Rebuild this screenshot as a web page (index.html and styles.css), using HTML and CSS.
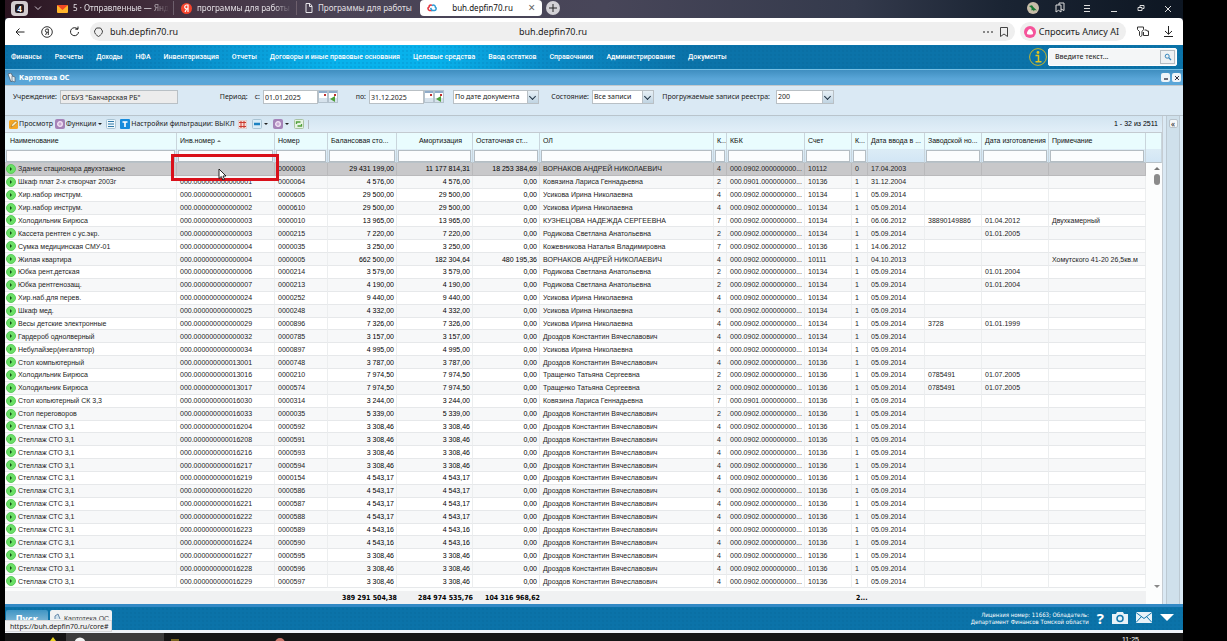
FILE: index.html
```html
<!DOCTYPE html>
<html lang="ru">
<head>
<meta charset="utf-8">
<title>Картотека ОС</title>
<link rel="stylesheet" href="styles.css">
</head>
<body>
<div class="screen">
  <header class="tabs">
    <button class="tab-count">4</button>
    <button class="ico chev"><svg width="8" height="6" viewBox="0 0 8 6"><path d="M1 1.5l3 3 3-3" fill="none" stroke="#cfc7cf"/></svg></button>
    <a class="tab t1" href="#"><svg width="11" height="9" viewBox="0 0 11 9"><rect y="1" width="11" height="8" rx="1" fill="#ffb52b"/><path d="M0 1h11L5.500 6z" fill="#f04824"/></svg><span>5 · Отправленные — Яндекс</span></a>
    <a class="tab t2" href="#"><svg width="11" height="11" viewBox="0 0 11 11"><circle cx="5.500" cy="5.500" r="5.500" fill="#f5442c"/><path d="M7 9V2H5.700a1.900 1.900 0 000 3.900H7M5.600 6L4 9" fill="none" stroke="#fff" stroke-width="1.200"/></svg><span>программы для работы бухгалтера</span></a>
    <a class="tab t3" href="#"><svg width="8" height="10" viewBox="0 0 8 10"><path d="M1 .5h4l2 2.500v6.500H1zM4.500 1v2.500H7" fill="none" stroke="#e8e6ea"/></svg><span>Программы для работы</span></a>
    <a class="tab active" href="#"><svg width="10" height="8" viewBox="0 0 10 8"><path d="M5 1.500C3.500.3 2 1.500 2 3 .5 3.500.7 6 2.500 6.500H5" fill="none" stroke="#e5333d" stroke-width="1.600"/><path d="M5 1.500c2-1 3.500 0 3.300 1.700C9.700 4 9.300 6.300 7.500 6.500H5L3.500 4" fill="none" stroke="#2c9bd6" stroke-width="1.500"/></svg><span>buh.depfin70.ru</span><i>×</i></a>
    <button class="plus" aria-label="Новая вкладка"><svg width="8" height="8" viewBox="0 0 8 8"><path d="M4 0v8M0 4h8" stroke="#222"/></svg></button>
    <div class="win">
      <svg width="12" height="12" viewBox="0 0 12 12"><circle cx="6" cy="6" r="6" fill="#c8bda9"/><path d="M2 4l3-.8 1.500 2L10 8.500 7.500 8 7 9.500 6 8 4.500 8.500 4.500 6z" fill="#187a34"/></svg>
      <svg width="12" height="12" viewBox="0 0 12 12"><path d="M2 3h5v7L4.500 8.300 2 10zM5 3V1h5v7.500L7 7" fill="none" stroke="#ddd"/></svg>
      <svg width="12" height="12" viewBox="0 0 12 12"><path d="M3 3.500h6M3 6.500h6M3 9.500h6" stroke="#ddd"/></svg>
      <svg width="12" height="12" viewBox="0 0 12 12"><path d="M3 9.500h6" stroke="#ddd"/></svg>
      <svg width="12" height="12" viewBox="0 0 12 12"><path d="M3 5.500h4v3H3zM5 5V3.500h4v3H7.500" fill="none" stroke="#ddd"/></svg>
      <svg width="12" height="12" viewBox="0 0 12 12"><path d="M3 4l6 6M9 4l-6 6" stroke="#ddd"/></svg>
    </div>
  </header>

  <div class="address">
    <button class="ico"><svg width="10" height="10" viewBox="0 0 10 10"><path d="M9.500 5H1M4.500 1.500L1 5l3.500 3.500" fill="none" stroke="#222"/></svg></button>
    <button class="ico"><svg width="12" height="12" viewBox="0 0 12 12"><circle cx="6" cy="6" r="5.300" fill="none" stroke="#333"/><path d="M7.300 9V3H6a1.600 1.600 0 000 3.300h1.300M5.800 6.300L4.600 9" fill="none" stroke="#333"/></svg></button>
    <button class="ico"><svg width="11" height="11" viewBox="0 0 11 11"><path d="M9.500 6A4 4 0 117 2l2 1M9 .5V3.200H6.300" fill="none" stroke="#222"/></svg></button>
    <div class="urlbar">
      <svg width="9" height="10" viewBox="0 0 9 10"><path d="M2.500 1h4l2 3c0 2.500-1.500 4-4 5.500C2 8 .5 6.500.5 4z" fill="none" stroke="#444"/></svg>
      <span class="url">buh.depfin70.ru</span>
      <span class="url-center">buh.depfin70.ru</span>
      <svg width="10" height="2" viewBox="0 0 10 2"><path d="M0 1h2M4 1h2M8 1h2" stroke="#666" stroke-width="1.500"/></svg>
      <svg width="8" height="10" viewBox="0 0 8 10"><path d="M.5.500h7v9L4 7 .5 9.500z" fill="none" stroke="#444"/></svg>
    </div>
    <button class="alice"><svg width="12" height="12" viewBox="0 0 12 12"><circle cx="6" cy="6" r="6" fill="#f5539a"/><path d="M6 3c1.500 0 3.500 3.500 3 4.800C8.500 9 3.500 9 3 7.800 2.500 6.500 4.500 3 6 3z" fill="#fff"/></svg>Спросить Алису AI</button>
    <button class="ico"><svg width="12" height="11" viewBox="0 0 12 11"><path d="M.5 1h6v2.500L5 5.500v4L3.500 10.500 2.500 9.500V5.500L.5 3.500zM7.500 4h2l.5 1h1.500v4.500h-5V6" fill="none" stroke="#333"/></svg></button>
    <button class="ico dl"><svg width="9" height="11" viewBox="0 0 9 11"><path d="M4.500 0v8M1 5l3.500 3.300L8 5M0 10.500h9" fill="none" stroke="#222"/></svg></button>
  </div>

  <nav class="menu">
    <a href="#">Финансы</a><a href="#">Расчеты</a><a href="#">Доходы</a><a href="#">НФА</a><a href="#">Инвентаризация</a><a href="#">Отчеты</a><a href="#">Договоры и иные правовые основания</a><a href="#">Целевые средства</a><a href="#">Ввод остатков</a><a href="#">Справочники</a><a href="#">Администрирование</a><a href="#">Документы</a>
    <button class="info"><svg width="18" height="18" viewBox="0 0 18 18"><circle cx="9" cy="9" r="8.400" fill="none" stroke="#c9b52a"/><circle cx="9" cy="4.500" r="1.400" fill="#e5c51f"/><path d="M6.500 7.500H9.500V13.500M6.500 13.800h6" fill="none" stroke="#e5c51f" stroke-width="1.500"/></svg></button>
    <div class="search"><input type="text" aria-label="Поиск" placeholder="Введите текст..."><button aria-label="Найти"><svg width="8" height="8" viewBox="0 0 8 8"><circle cx="3.200" cy="3.200" r="2" fill="none" stroke="#3787bd"/><path d="M4.800 4.800L7 7" stroke="#3787bd" stroke-width="1.300"/></svg></button></div>
  </nav>

  <div class="title">
    <svg width="10" height="10" viewBox="0 0 10 10"><path d="M1 1l3-1 3 6-3 3z" fill="#e9eef2" stroke="#456" stroke-width=".7"/><path d="M5 3l3 1v5l-3-1z" fill="#dde8ee" stroke="#456" stroke-width=".6"/></svg>
    <h1>Картотека ОС</h1>
    <button aria-label="Свернуть"><svg width="8" height="8" viewBox="0 0 8 8"><path d="M2 5h4" stroke="#334" stroke-width="1.400"/></svg></button>
    <button aria-label="Закрыть"><svg width="8" height="8" viewBox="0 0 8 8"><path d="M2 2l4 4M6 2L2 6" stroke="#334"/></svg></button>
  </div>

  <form class="filters">
    <label class="l-org" for="org">Учреждение:</label><input id="org" class="f-org" value='ОГБУЗ "Бакчарская РБ"' readonly>
    <label class="l-period" for="from"><span>Период:</span>с:</label><input id="from" class="f-date" value="01.01.2025"><span class="cal"></span><span class="cal go"></span>
    <label class="l-to" for="to">по:</label><input id="to" class="f-date" value="31.12.2025"><span class="cal"></span><span class="cal go"></span>
    <span class="combo c-doc"><select aria-label="Тип даты"><option>По дате документа</option></select></span>
    <label class="l-state" for="state">Состояние:</label><span class="combo c-state"><select id="state"><option>Все записи</option></select></span>
    <label class="l-count" for="count">Прогружаемые записи реестра:</label><span class="combo c-count"><select id="count"><option>200</option></select></span>
  </form>

  <main class="work">
    <section class="registry">
      <div class="toolbar">
        <button><svg width="9" height="9" viewBox="0 0 9 9"><rect width="9" height="9" rx="1.500" fill="#f5a623"/><path d="M2 7l1-2.500L6.500 1 8 2.500 4.500 6z" fill="#fff3c8" stroke="#7a5a18" stroke-width=".5"/></svg>Просмотр</button>
        <button><svg width="10" height="10" viewBox="0 0 10 10"><rect width="10" height="10" rx="2" fill="#a583b8"/><circle cx="5" cy="5" r="2.300" fill="#c9a9d4" stroke="#f3e6f6" stroke-width="1.300"/></svg>Функции<b></b></button>
        <button class="list"><svg width="10" height="10" viewBox="0 0 10 10"><rect x=".5" y=".5" width="9" height="9" rx="1" fill="#eef7fc" stroke="#a9c3d3"/><path d="M2 2.500h6M2 5h6M2 7.500h6" stroke="#2f78a8"/></svg></button>
        <button><svg width="10" height="10" viewBox="0 0 10 10"><rect width="10" height="10" rx="1" fill="#168bdc"/><path d="M2.500 3h5M5 3v5" stroke="#fff" stroke-width="1.600"/></svg>Настройки фильтрации: ВЫКЛ</button>
        <button class="gap"><svg width="9" height="9" viewBox="0 0 9 9"><rect width="9" height="9" rx="1" fill="#f8dcd6" stroke="#a9b3bb" stroke-width=".5"/><path d="M1 2.500h7M1 6.500h7M3 1v7M6 1v7" stroke="#c93a31"/></svg></button>
        <button class="gap"><svg width="10" height="10" viewBox="0 0 10 10"><rect x=".5" y=".5" width="9" height="9" rx="1" fill="#d8ecf7" stroke="#a9c3d3"/><path d="M2 5h6" stroke="#1c82c2" stroke-width="2.500"/></svg><b></b></button>
        <button class="gap"><svg width="10" height="10" viewBox="0 0 10 10"><rect width="10" height="10" rx="2" fill="#a583b8"/><circle cx="5" cy="5" r="2.300" fill="#c9a9d4" stroke="#f3e6f6" stroke-width="1.300"/></svg><b></b></button>
        <button class="gap"><svg width="10" height="10" viewBox="0 0 10 10"><rect x=".5" y=".5" width="9" height="9" rx="1" fill="#e6f3e2" stroke="#a9c3a3"/><path d="M2.500 5V3h4M7.500 5v2h-4" fill="none" stroke="#51a03c" stroke-width="1.300"/></svg></button>
        <i class="sep"></i>
        <span class="range">1 - 32 из 2511</span>
      </div>
      <div class="grid">
        <table>
          <colgroup><col><col class="w-inv"><col class="w-num"><col class="w-bal"><col class="w-amo"><col class="w-ost"><col class="w-ol"><col class="w-k"><col class="w-kbk"><col class="w-acc"><col class="w-q"><col class="w-in"><col class="w-fab"><col class="w-made"><col class="w-note"><col class="w-bar"></colgroup>
          <thead>
            <tr class="names"><th>Наименование</th><th>Инв.номер <i class="sort"></i></th><th>Номер</th><th>Балансовая сто...</th><th class="r">Амортизация</th><th>Остаточная ст...</th><th>ОЛ</th><th>К...</th><th>КБК</th><th>Счет</th><th>К...</th><th>Дата ввода в ...</th><th>Заводской но...</th><th>Дата изготовления</th><th>Примечание</th><th></th></tr>
            <tr class="search-row"></tr>
          </thead>
          <tbody></tbody>
          <tfoot>
            <tr><td></td><td></td><td></td><td>389 291 504,38</td><td>284 974 535,76</td><td>104 316 968,62</td><td></td><td></td><td></td><td></td><td class="cnt">2...</td><td></td><td></td><td></td><td></td><td class="bar"></td></tr>
          </tfoot>
        </table>
        <div class="scroll"><i class="up"></i><i class="thumb"></i><i class="down"></i></div>
      </div>
    </section>
    <aside class="side"><button aria-label="Развернуть">«</button></aside>
  </main>

  <footer class="desk">
    <button class="start">Пуск</button>
    <button class="task"><svg width="8" height="8" viewBox="0 0 8 8"><path d="M1 6V3l3-2 2 5" fill="#cfe3ee" stroke="#68a" /></svg>Картотека ОС</button>
    <p>Лицензия номер: 11663; Обладатель:<br>Департамент Финансов Томской области</p>
    <button class="help">?</button>
    <button><svg width="16" height="12" viewBox="0 0 16 12"><path d="M0 2h4l1-2h6l1 2h4v10H0z" fill="#e8f2f8"/><circle cx="8" cy="6.500" r="3" fill="none" stroke="#1277ad" stroke-width="1.500"/></svg></button>
    <button><svg width="16" height="11" viewBox="0 0 16 11"><rect width="16" height="11" fill="#e8f2f8"/><path d="M0 .5l8 6 8-6M0 10.500l5.500-6M16 10.500l-5.500-6" fill="none" stroke="#1277ad"/></svg></button>
    <button><svg width="14" height="7" viewBox="0 0 14 7"><path d="M0 0h14L7 7z" fill="#fff"/></svg></button>
  </footer>
  <div class="status">https://buh.depfin70.ru/core#</div>
  <div class="mark"></div>
  <svg class="pointer" width="9" height="13" viewBox="0 0 9 13"><path d="M1 1v9.500l2.300-2 1.500 3.500 1.700-.7L5 8h3z" fill="#fff" stroke="#111" stroke-width=".9"/></svg>
</div>
<div class="taskbar">
  <svg width="14" height="8" viewBox="0 0 14 8"><path d="M5 8l3-4 3 4z" fill="#e8d21f"/></svg>
  <span class="app"><svg width="12" height="8" viewBox="0 0 12 8"><circle cx="6" cy="10" r="5.500" fill="#f2f2f2"/></svg></span>
  <svg width="10" height="8" viewBox="0 0 10 8"><path d="M0 6h8v2H0z" fill="#7a6520"/></svg>
  <svg class="red" width="12" height="8" viewBox="0 0 12 8"><circle cx="6" cy="10" r="5" fill="#c77468"/></svg>
  <time>11:25</time>
</div>
<script src="grid.js"></script>
</body>
</html>
```
FILE: styles.css
```css
* { box-sizing: border-box; }
body {
  margin: 0; min-height: 100vh; background: #000; color: #1c1c1c;
  font: 7px/12px "Liberation Sans", Arial, sans-serif;
  display: flex; flex-direction: column; overflow: hidden;
}
button { border: 0; padding: 0; background: none; font: inherit; color: inherit; display: flex; align-items: center; }
a { color: inherit; text-decoration: none; }
svg { display: block; flex: none; }
input, select { font: inherit; color: inherit; min-width: 0; border-radius: 0; }

.screen { position: relative; flex: 1; margin: 0 44px 0 5px; display: flex; flex-direction: column; background: #242a38; }

/* browser tabs */
.tabs {
  height: 18px; display: flex; align-items: center; padding-bottom: 2px; color: #e4e0e5;
  font: 8px/14px "Noto Sans", sans-serif;
  background: linear-gradient(90deg, #2a1420 0, #44303f 170px, #4a4355 330px, #484659 600px, #343a4c 850px, #1a2433 1000px, #0d1622 100%);
}
.tab-count { margin-left: 6px; width: 17px; height: 15px; border-radius: 4px; background: #d4cdd0; color: #fff; padding: 3px; font: bold 8px/9px "Noto Sans", sans-serif; justify-content: center; position: relative; z-index: 0; }
.tab-count::before { content: ""; position: absolute; z-index: -1; inset: 3px 4px; background: #241a1f; border-radius: 2px; }
.chev { width: 20px; justify-content: center; }
.tab { display: flex; align-items: center; gap: 5px; height: 14px; }
.tab span { overflow: hidden; white-space: nowrap; flex: 1; }
.t1, .t2 { border-right: 1px solid #6d5f6c; padding-right: 4px; }
.t1 span, .t2 span { mask-image: linear-gradient(90deg, #000 80%, transparent); }
.t1 { width: 122px; margin-left: 4px; padding-left: 5px; }
.t2 { width: 123px; padding-left: 7px; }
.t3 { width: 121px; padding-left: 8px; }
.tab.active { width: 122px; height: 16px; background: #fff; color: #111; border-radius: 4px; padding: 0 7px; margin-left: 2px; }
.active span { text-align: center; }
.active i { font: 12px/12px "Noto Sans", sans-serif; color: #666; }
.plus { margin-left: 4px; width: 14px; height: 14px; border-radius: 7px; background: #d3d1d6; justify-content: center; }
.win { margin-left: auto; display: flex; gap: 15px; padding-right: 9px; }

/* address bar */
.address { height: 27px; background: #fff; border-radius: 4px 4px 0 0; display: flex; align-items: center; padding: 0 10px; gap: 16px; color: #222; font: 9px/14px "Noto Sans", sans-serif; }
.urlbar { position: relative; flex: 1; height: 19px; margin-left: -6px; margin-right: -11px; border-radius: 10px; background: #efefef; display: flex; align-items: center; padding: 0 7px 0 4px; gap: 7px; }
.url { flex: 1; }
.url-center { position: absolute; left: 429px; }
.alice { height: 19px; border-radius: 10px; background: #efefef; padding: 0 7px 0 4px; gap: 3px; margin-right: -5px; white-space: nowrap; }
.dl { margin-left: -1px; }

/* main menu */
.menu {
  height: 25px; display: flex; align-items: center; gap: 13px; padding: 0 6px; color: #fff; border-bottom: 1px solid #78c0e4;
  font: 500 7px/12px Roboto, "Liberation Sans", sans-serif; white-space: nowrap;
  background: radial-gradient(#00558822 1px, transparent 1px) 0 0 / 4px 4px, linear-gradient(90deg, #0c72a9 0, #0a86c2 150px, #08b2ec 330px, #08b2ec 430px, #0a8cc8 540px, #0b73a9 680px, #0b73a9 100%);
}
.info { margin-left: auto; margin-right: -12px; }
.search { width: 129px; height: 18px; background: #f4f6f7; border: 1px solid #fff; border-radius: 2px; display: flex; align-items: center; padding: 1px; }
.search input { flex: 1; border: 0; background: none; padding: 0 5px; font-family: "Noto Sans", sans-serif; }
.search input::placeholder { color: #333; opacity: 1; }
.search button { width: 15px; height: 14px; border: 1px solid #b5bcc2; background: #eef1f3; justify-content: center; }

.title { height: 16px; display: flex; align-items: center; gap: 2px; padding: 0 2px; color: #fff; background: linear-gradient(#3f8ec0, #5aa6d8 60%); border-bottom: 1px solid #c3c9cd; }
.title h1 { flex: 1; margin: 0; font: bold 7px/12px "DejaVu Sans Condensed", "DejaVu Sans", sans-serif; }
.title button { width: 9px; height: 9px; border-radius: 2px; background: #eef4f8; justify-content: center; }

/* filter form */
.filters { height: 30px; padding-top: 4px; display: flex; align-items: flex-start; background: #dae9f4; border-bottom: 1px solid #b9c4cc; white-space: nowrap; line-height: 13px; }
.filters label { text-align: right; padding-right: 3px; font-family: "Noto Sans", sans-serif; }
.filters input, .combo { height: 14px; border: 1px solid #b9c0c5; background: #fff; padding: 0 1px; font: 7px/12px "Noto Sans", sans-serif; }
.l-org { width: 55px; } .f-org { width: 118px; }
.filters .f-org { background: #ececec; }
.l-period { width: 85px; } .l-period span { margin-right: 7px; }
.f-date { width: 55px; } .l-to { width: 31px; }
.cal { width: 10px; height: 13px; border: 1px solid #b4c2cd; background: linear-gradient(#8facca 2px, #fff 2px 7px, #d6e2ec 7px); position: relative; }
.cal::after { content: ""; position: absolute; right: 1px; top: 3px; width: 2px; height: 2px; background: #c03030; }
.cal.go::before { content: ""; position: absolute; left: 1px; bottom: 0; border: 3px solid transparent; border-right: 5px solid #4d9f3a; border-left: 0; }
.combo { position: relative; display: flex; }
.combo select { flex: 1; appearance: none; border: 0; background: none; padding: 0 10px 0 0; outline: 0; }
.combo::after { content: ""; position: absolute; pointer-events: none; right: 0; top: 0; width: 10px; height: 12px; background: linear-gradient(#e7f0f6, #c0d4e2); border-left: 1px solid #b9c0c5; }
.combo::before { content: ""; position: absolute; z-index: 1; pointer-events: none; right: 3px; top: 3px; width: 4px; height: 4px; border: solid #234; border-width: 0 1px 1px 0; transform: rotate(45deg); }
.c-doc { width: 86px; margin-left: 9px; }
.l-state { width: 53px; } .c-state { width: 62px; }
.l-count { width: 122px; } .filters .l-count { padding-right: 6px; } .c-count { width: 58px; }

/* registry */
.work { flex: 1; display: flex; background: #dae9f4; }
.registry { flex: 1; min-width: 0; display: flex; flex-direction: column; border-right: 1px solid #c5ccd2; }
.side { width: 14px; margin: 0 3px; background: #cfe0eb; border: solid #bcc9d2; border-width: 0 1px; display: flex; justify-content: center; align-items: flex-start; padding-top: 3px; }
.side button { width: 9px; height: 9px; border: 1px solid #b9c3cb; border-radius: 2px; background: #f4f7f9; font: 8px/7px "Noto Sans", sans-serif; justify-content: center; }
.toolbar { height: 17px; display: flex; align-items: center; padding: 0 4px; background: linear-gradient(#d2e4f0, #e2eff8); border-bottom: 1px solid #c3cad0; white-space: nowrap; font-family: "Noto Sans", sans-serif; }
.toolbar button { gap: 1px; margin-right: 2px; }
.toolbar b { border: 2px solid transparent; border-top-color: #222; margin: 2px 0 0 1px; }
.toolbar .list { margin: 0 4px 0 2px; }
.toolbar .gap { margin: 0 4px 0 1px; }
.toolbar .gap:nth-last-child(3) { margin-right: 2px; }
.sep { width: 1px; height: 9px; background: #b5bcc2; margin-left: 2px; }
.range { margin-left: auto; font-family: "Liberation Sans", Arial, sans-serif; color: #000; }

.grid { position: relative; flex: 1; display: flex; background: #fcfdfd; }
table { width: 100%; table-layout: fixed; border-collapse: separate; border-spacing: 0; }
th, td { padding: 0 3px; overflow: hidden; white-space: nowrap; text-align: left; font-weight: normal; }
.w-inv { width: 98px; } .w-num { width: 53px; } .w-bal { width: 69px; } .w-amo { width: 76px; } .w-ost { width: 67px; }
.w-ol { width: 174px; } .w-k { width: 13px; } .w-kbk { width: 78px; } .w-acc { width: 47px; } .w-q { width: 16px; }
.w-in { width: 57px; } .w-fab { width: 57px; } .w-made { width: 67px; } .w-note { width: 97px; } .w-bar { width: 16px; }
th { background: #e9fcfe; border-right: 1px solid #c9d5dc; color: #111; }
.names th { height: 16px; }
.names .r { text-align: right; padding-right: 10px; }
.names th:first-child { padding-left: 5px; }
.search-row th { height: 14px; padding: 0 1px; background: linear-gradient(#dcecf6, #d2e6f5); border-bottom: 1px solid #b9c2c8; }
.search-row input { display: block; width: 100%; height: 12px; padding: 0 2px; border: 1px solid #b4bdc3; background: #fbfdfe; }
.sort { display: inline-block; border: 2px solid transparent; border-bottom-color: #777; margin-bottom: 1px; }
tbody td { line-height: 11px; border-bottom: 1px solid #e6e8ea; border-right: 1px solid #eceeef; background: #fff; }
tbody tr:nth-child(even) td { background: #f7f8f9; }
tbody tr.selected td { background: #c8c8ca; border-color: #b9b9bb; }
tbody tr td.bar, tbody tr:nth-child(even) td.bar, tbody tr.selected td.bar, tfoot tr td.bar { background: #fcfdfd; border-color: transparent; }
td.name { padding-left: 1px; }
.name div { display: flex; align-items: center; gap: 2px; height: 11px; }
.play { flex: none; width: 10px; height: 10px; border-radius: 5px; background: #6be066; border: 1px solid #5ccb5c; position: relative; }
.play::after { content: ""; position: absolute; left: 3px; top: 2px; border: 2px solid transparent; border-left-color: #124d17; border-right: 0; }
td.money { text-align: right; padding-right: 2px; color: #000; }
tfoot td { height: 16px; border-top: 3px solid #fcfdfd; background: #f0f1f2; font: bold 7px/12px "DejaVu Sans Condensed", "DejaVu Sans", sans-serif; text-align: right; padding: 0; color: #000; }
tfoot .cnt { text-align: left; padding-left: 4px; overflow: visible; }
.scroll { position: absolute; right: 0; top: 32px; bottom: 16px; width: 10px; display: flex; flex-direction: column; align-items: center; }
.scroll .up { border: 3px solid transparent; border-bottom-color: #777; border-top-width: 0; margin-top: 2px; }
.scroll .thumb { width: 6px; height: 11px; margin-top: 4px; border-radius: 3px; background: #8b8b8b; }
.scroll .down { margin-top: auto; border: 3px solid transparent; border-top-color: #888; border-bottom-width: 0; }

/* application footer */
.desk {
  height: 29px; display: flex; align-items: center; gap: 8px; padding: 0 9px 2px 1px; color: #fff;
  border-top: 3px solid #3389c5; border-bottom: 3px solid #eef3f8;
  background: radial-gradient(#00558822 1px, transparent 1px) 0 0 / 4px 4px, #0b73a9;
}
.start, .task { align-self: flex-end; height: 18px; padding: 3px 4px 0; align-items: flex-start; border-radius: 2px 2px 0 0; }
.start { width: 42px; justify-content: center; background: linear-gradient(#3f95c4, #9fc8df); font: bold 9px/13px "DejaVu Sans Condensed", sans-serif; }
.task { width: 62px; gap: 2px; margin-left: -6px; background: #f0f2f3; color: #444; white-space: nowrap; overflow: hidden; line-height: 12px; }
.desk p { margin: 0 0 0 auto; text-align: right; font: 6px/7px "DejaVu Sans Condensed", "DejaVu Sans", sans-serif; }
.help { font: bold 15px/16px "Noto Sans", sans-serif; }
.status { position: absolute; left: 0; bottom: 1px; width: 107px; height: 12px; padding-left: 5px; background: #f0f1f2; border: 1px solid #d5d7d9; border-left: 0; font: 7px/11px "Noto Sans", sans-serif; }
.mark { position: absolute; left: 166px; top: 154px; width: 108px; height: 27px; border: 3px solid #d9101a; }
.pointer { position: absolute; left: 213px; top: 168px; }

.taskbar { height: 8px; margin: 0 44px 0 5px; padding-left: 40px; background: #151515; display: flex; overflow: hidden; color: #fff; gap: 7px; }
.app { width: 98px; padding-left: 8px; background: #3c3c3c; }
.red { margin-left: 86px; }
.taskbar time { margin-left: auto; margin-right: 44px; padding-top: 2px; line-height: 10px; }
```
FILE: grid.js
```js
const D = "Дроздов Константин Вячеславович", U = "Усикова Ирина Николаевна",
  R = "Родикова Светлана Анатольевна", K = "Ковязина Лариса Геннадьевна",
  V = "ВОРНАКОВ АНДРЕЙ НИКОЛАЕВИЧ", T = "Тращенко Татьяна Сергеевна", S = "05.09.2014";

// name | inventory suffix | number | cost | depreciation | rest | person | k | kbk | account | qty | date | serial | made | note
const rows = [
  ["Здание стационара двухэтажное", "", "0000003", "29 431 199,00", "11 177 814,31", "18 253 384,69", V, 4, 2, "10112", 0, "17.04.2003"],
  ["Шкаф плат 2-х створчат 2003г", "00001", "0000064", "4 576,00", "4 576,00", "0,00", K, 2, 1, "10136", 1, "31.12.2004"],
  ["Хир.набор инструм.", "00001", "0000605", "29 500,00", "29 500,00", "0,00", U, 4, 2, "10134", 1, S],
  ["Хир.набор инструм.", "00002", "0000610", "29 500,00", "29 500,00", "0,00", U, 4, 2, "10134", 1, S],
  ["Холодильник Бирюса", "00003", "0000010", "13 965,00", "13 965,00", "0,00", "КУЗНЕЦОВА НАДЕЖДА СЕРГЕЕВНА", 7, 2, "10134", 1, "06.06.2012", "38890149886", "01.04.2012", "Двухкамерный"],
  ["Кассета рентген с ус.экр.", "00003", "0000215", "7 220,00", "7 220,00", "0,00", R, 2, 2, "10134", 1, S, "", "01.01.2005"],
  ["Сумка медицинская СМУ-01", "00004", "0000035", "3 250,00", "3 250,00", "0,00", "Кожевникова Наталья Владимировна", 7, 2, "10136", 1, "14.06.2012"],
  ["Жилая квартира", "00004", "0000005", "662 500,00", "182 304,64", "480 195,36", V, 4, 2, "10111", 1, "04.10.2013", "", "", "Хомутского 41-20 26,5кв.м"],
  ["Юбка рент.детская", "00006", "0000214", "3 579,00", "3 579,00", "0,00", R, 2, 2, "10134", 1, S, "", "01.01.2004"],
  ["Юбка рентгенозащ.", "00007", "0000213", "4 190,00", "4 190,00", "0,00", R, 2, 2, "10134", 1, S, "", "01.01.2004"],
  ["Хир.наб.для перев.", "00024", "0000252", "9 440,00", "9 440,00", "0,00", U, 4, 2, "10134", 1, S],
  ["Шкаф мед.", "00025", "0000248", "4 332,00", "4 332,00", "0,00", U, 4, 2, "10134", 1, S],
  ["Весы детские электронные", "00029", "0000896", "7 326,00", "7 326,00", "0,00", U, 4, 2, "10134", 1, S, "3728", "01.01.1999"],
  ["Гардероб однолверный", "00032", "0000785", "3 157,00", "3 157,00", "0,00", D, 4, 2, "10134", 1, S],
  ["Небулайзер(ингалятор)", "00034", "0000897", "4 995,00", "4 995,00", "0,00", U, 4, 2, "10134", 1, S],
  ["Стол компьютерный", "13001", "0000748", "3 787,00", "3 787,00", "0,00", D, 4, 2, "10136", 1, S],
  ["Холодильник Бирюса", "13016", "0000210", "7 974,50", "7 974,50", "0,00", T, 2, 2, "10136", 1, S, "0785491", "01.07.2005"],
  ["Холодильник Бирюса", "13017", "0000574", "7 974,50", "7 974,50", "0,00", T, 2, 2, "10136", 1, S, "0785491", "01.07.2005"],
  ["Стол копьютерный СК 3,3", "16030", "0000314", "3 244,00", "3 244,00", "0,00", K, 7, 1, "10136", 1, S],
  ["Стол переговоров", "16033", "0000035", "5 339,00", "5 339,00", "0,00", D, 2, 2, "10136", 1, S]
];

const shelves = [
  ["О", 16204, 592, "3 308,46"], ["О", 16208, 591, "3 308,46"], ["О", 16216, 593, "3 308,46"],
  ["О", 16217, 594, "3 308,46"], ["С", 16219, 154, "4 543,17"], ["С", 16220, 586, "4 543,17"],
  ["С", 16221, 587, "4 543,17"], ["С", 16222, 588, "4 543,17"], ["С", 16223, 589, "4 543,16"],
  ["С", 16224, 590, "4 543,16"], ["О", 16227, 595, "3 308,46"], ["О", 16228, 596, "3 308,46"],
  ["О", 16229, 597, "3 308,46"]
];
for (const [type, inv, num, sum] of shelves) {
  rows.push([`Стеллаж СТ${type} 3,1`, String(inv), `0000${num}`, sum, sum, "0,00", D, 4, 2, "10136", 1, S]);
}

const body = document.querySelector("tbody");
rows.forEach((row, index) => {
  const tr = body.insertRow();
  if (index === 0) tr.className = "selected";
  for (let i = 0; i < 15; i++) {
    const td = tr.insertCell();
    let text = row[i] ?? "";
    if (i === 1 && text) text = "000.0000000000" + text;
    if (i === 8) text = `000.090${text}.000000000...`;
    if (i >= 3 && i <= 5) td.className = "money";
    if (i === 0) {
      td.className = "name";
      const box = document.createElement("div"), play = document.createElement("i");
      play.className = "play";
      box.append(play, text);
      td.append(box);
    } else td.textContent = text;
  }
  tr.insertCell().className = "bar";
});

const titles = [...document.querySelectorAll(".names th")].map(th => th.textContent.trim());
const searchRow = document.querySelector(".search-row");
titles.forEach((title, i) => {
  const th = document.createElement("th");
  if (title && i !== 11) {
    const input = document.createElement("input");
    input.setAttribute("aria-label", title);
    th.append(input);
  }
  searchRow.append(th);
});
```
